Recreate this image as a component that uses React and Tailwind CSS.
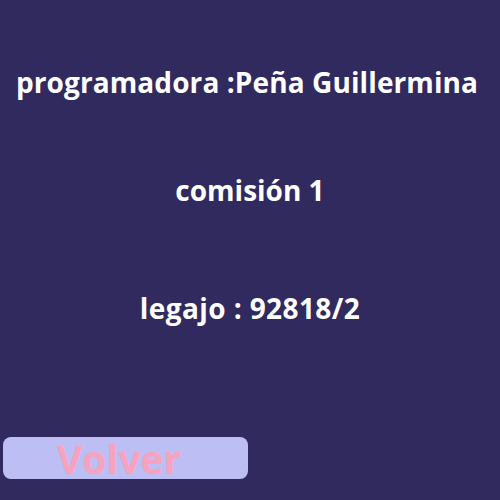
export default function App() {
  return (
    <div className="w-[500px] h-[500px] bg-[#302a5f] flex flex-col overflow-hidden" style={{ fontFamily: '"Open Sans", sans-serif' }}>
      <div className="text-white font-bold text-[28px] leading-[34px] text-center mt-[65px] pr-[6px] tracking-[0.1px]">programadora :Peña Guillermina</div>
      <div className="text-white font-bold text-[28px] leading-[34px] text-center mt-[74px]">comisión 1</div>
      <div className="text-white font-bold text-[28px] leading-[34px] text-center mt-[84px] tracking-[0.4px]">legajo : 92818/2</div>
      <div className="mt-[112px] ml-[3px] w-[245px] h-[42px] rounded-[8px] bg-[#bdbef4] flex items-center">
        <span className="ml-[54px] text-[#f7a3bf] font-bold text-[39px] leading-[39px]">Volver</span>
      </div>
    </div>
  );
}
